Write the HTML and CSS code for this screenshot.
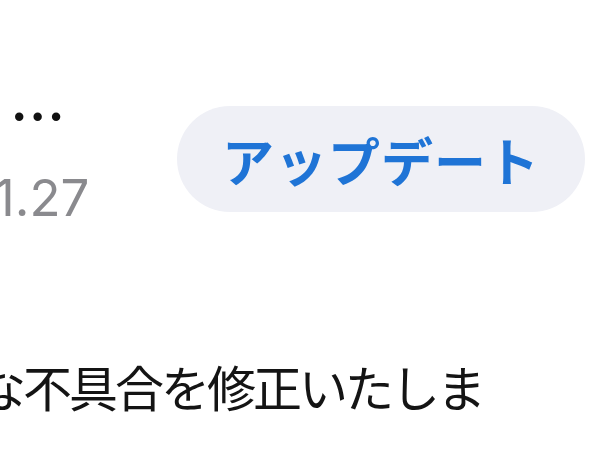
FILE: index.html
```html
<!DOCTYPE html>
<html lang="ja">
<head>
<meta charset="utf-8">
<link rel="stylesheet" href="styles.css">
</head>
<body>
<main class="screen">
  <section class="app-row">
    <div class="app-info">
      <div class="app-title">…</div>
      <div class="app-version">1.27</div>
    </div>
    <button class="update-btn">アップデート</button>
  </section>
  <p class="notes">な不具合を修正いたしま</p>
</main>
</body>
</html>
```

FILE: styles.css
```css
html, body {
  margin: 0;
  padding: 0;
  background: #ffffff;
  width: 600px;
  height: 450px;
  overflow: hidden;
}

.screen {
  width: 600px;
  height: 450px;
  overflow: hidden;
  font-family: "Inter", "Noto Sans CJK JP", sans-serif;
}

.app-row {
  display: flex;
  align-items: flex-start;
  padding-top: 106px;
}

.app-info {
  width: 177px;
  display: flex;
  flex-direction: column;
}

.app-title {
  font-family: "Inter", sans-serif;
  font-size: 64px;
  line-height: 40px;
  height: 40px;
  color: #111111;
  margin-top: -28px;
  margin-left: 10px;
}

.app-version {
  font-family: "Inter", sans-serif;
  font-size: 51px;
  line-height: 1;
  color: #8a8a8e;
  margin-left: -6px;
  margin-top: 54px;
}

.update-btn {
  width: 408px;
  height: 106px;
  border: none;
  border-radius: 53px;
  background: #eff0f6;
  color: #1f74d6;
  font-family: "Noto Sans CJK JP", sans-serif;
  font-weight: 700;
  font-size: 52px;
  letter-spacing: 1px;
  padding: 0;
  display: flex;
  align-items: center;
  justify-content: center;
}

.notes {
  margin: 0;
  margin-top: 138px;
  margin-left: -23px;
  font-family: "Noto Sans CJK JP", sans-serif;
  font-size: 49px;
  letter-spacing: -3px;
  line-height: 1;
  color: #141414;
  white-space: nowrap;
}
```
